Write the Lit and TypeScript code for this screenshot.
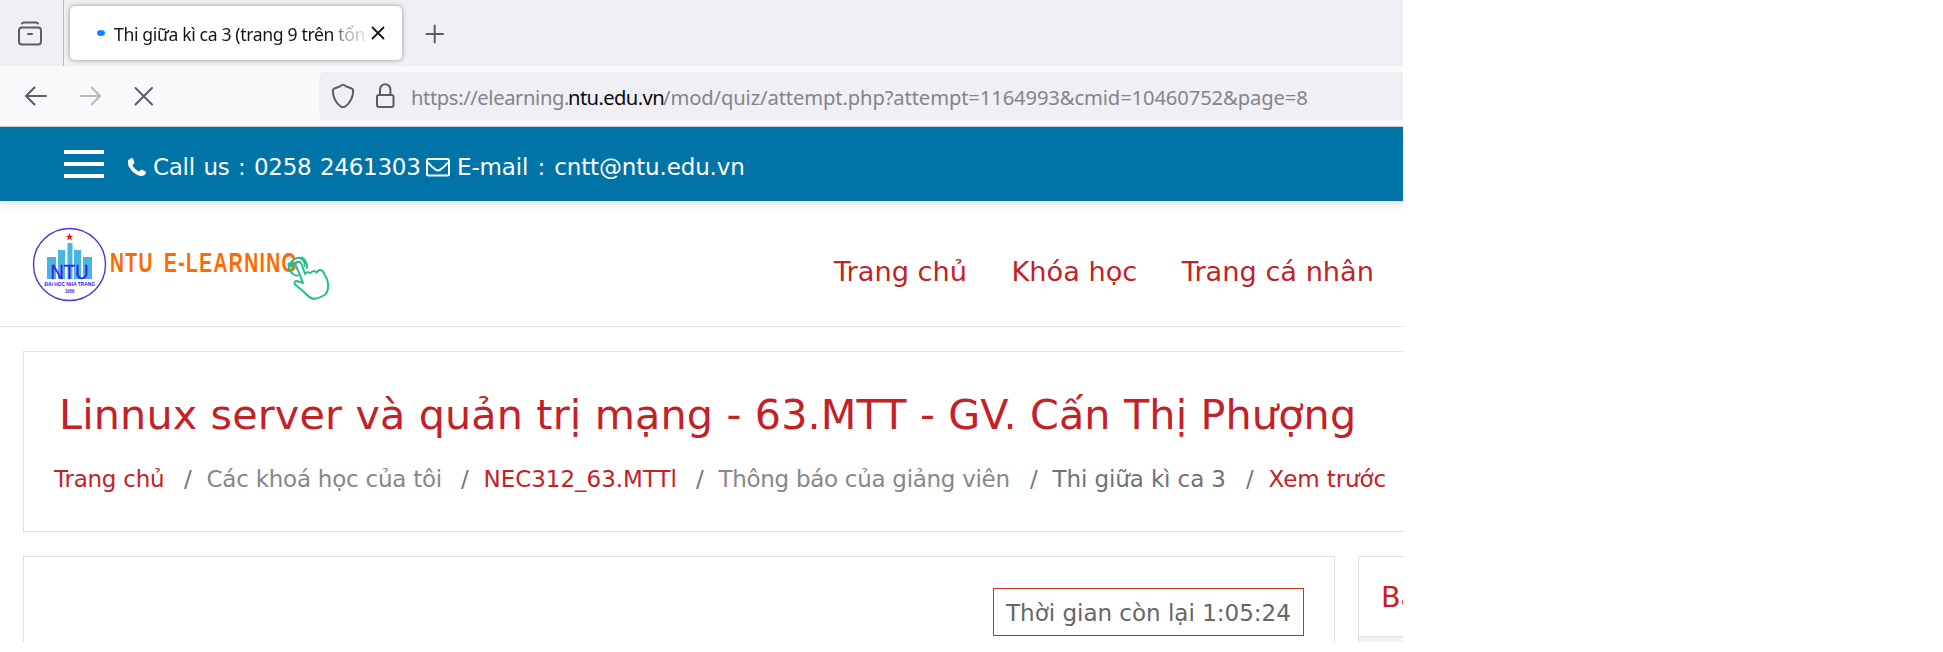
import { LitElement, html, css, svg } from "lit";
import { customElement } from "lit/decorators.js";
import { styleMap } from "lit/directives/style-map.js";

@customElement("browser-chrome")
class BrowserChrome extends LitElement {
  static styles = css`
    :host { display: block; font-family: "Noto Sans", "Open Sans", sans-serif; }
    svg { display: block; flex: none; fill: none; stroke: #5b5b66; stroke-width: 2; stroke-linecap: round; stroke-linejoin: round; }
    .tabs { display: flex; height: 66px; background: #f0f0f4; }
    .overview { box-sizing: border-box; width: 64px; padding: 21px 0 0 17px; border-right: 1px solid #b9b9bf; }
    .tab { box-sizing: border-box; display: flex; align-items: center; width: 332px; height: 54px; margin: 6px 0 0 6px; padding-left: 27px; border-radius: 5px; background: #fff; box-shadow: 0 0 5px rgba(0, 0, 0, 0.4); }
    .dot { width: 8px; height: 6px; border-radius: 50%; background: #0a84ff; }
    .title { width: 254px; margin-left: 9px; padding-top: 2px; overflow: hidden; white-space: nowrap; font-size: 17.6px; line-height: 30px; letter-spacing: -0.36px; color: #15141a; -webkit-mask-image: linear-gradient(90deg, #000 222px, rgba(0,0,0,.45) 228px, transparent 262px); mask-image: linear-gradient(90deg, #000 222px, rgba(0,0,0,.45) 228px, transparent 262px); }
    .close { margin-left: 3px; stroke: #15141a; stroke-width: 1.8; }
    .add { margin: 24px 0 0 23px; stroke-width: 2; }
    .bar { box-sizing: border-box; display: flex; align-items: center; height: 61px; padding-left: 24px; background: #f9f9fb; border-bottom: 1px solid #c9ced2; }
    .forward { margin-left: 31px; stroke: #b8b8c0; }
    .stop { margin-left: 31px; }
    .url { display: flex; align-items: center; flex: 1; height: 48px; margin-left: 165px; padding-left: 12px; border-radius: 6px 0 0 6px; background: #f0f0f4; white-space: nowrap; font-size: 20.2px; color: #84848a; }
    .lock { margin-left: 20px; }
    .address { display: flex; margin-left: 16px; padding-top: 2px; line-height: 30px; }
    .sub { width: 157px; letter-spacing: -0.4px; }
    .host { width: 95px; letter-spacing: -0.6px; color: #0c0c0d; }
    .path { letter-spacing: -0.12px; }
  `;
  render() {
    return html`
      <div class="tabs">
        <div class="overview">
          <svg width="26" height="25" viewBox="0 0 26 25"><path d="M5 2.5Q5.3 1.5 7 1.5H19Q20.7 1.5 21 2.5" /><rect x="2" y="6.5" width="22" height="17" rx="3" /><path d="M11 13H15" /></svg>
        </div>
        <div class="tab">
          <div class="dot"></div>
          <div class="title">Thi giữa kì ca 3 (trang 9 trên tổn</div>
          <svg class="close" width="14" height="14" viewBox="0 0 14 14"><path d="M1.5 1.5 12.5 12.5M12.5 1.5 1.5 12.5" /></svg>
        </div>
        <svg class="add" width="20" height="20" viewBox="0 0 20 20"><path d="M1.5 10H18M9.7 1.5V18.5" /></svg>
      </div>
      <div class="bar">
        <svg width="24" height="20" viewBox="0 0 24 20"><path d="M22 10H2M10.5 1.5 2 10l8.500 8.500" /></svg>
        <svg class="forward" width="24" height="20" viewBox="0 0 24 20"><path d="M1.500 10H21M12.500 1.500 21 10l-8.500 8.500" /></svg>
        <svg class="stop" width="20" height="20" viewBox="0 0 20 20"><path d="M1.500 2 18 18.500M18 2 1.500 18.500" /></svg>
        <div class="url">
          <svg width="24" height="26" viewBox="0 0 24 26"><path d="M12 1.700Q13 1.700 15 3.400L21.200 5.800Q22.200 6.300 22.200 7.500C22 14 20 19.500 14 23.700Q12 25 10 23.700C4 19.500 2 14 1.800 7.500Q1.800 6.300 2.800 5.800L9 3.400Q11 1.700 12 1.700Z" /></svg>
          <svg class="lock" width="20" height="26" viewBox="0 0 20 26"><rect x="2" y="12" width="16.500" height="12" rx="2" /><path d="M5 12V6.500a5.200 5.200 0 0 1 10.400 0V12" /></svg>
          <div class="address"><span class="sub">https://elearning.</span><span class="host">ntu.edu.vn</span><span class="path">/mod/quiz/attempt.php?attempt=1164993&amp;cmid=10460752&amp;page=8</span></div>
        </div>
      </div>`;
  }
}

@customElement("site-logo")
class SiteLogo extends LitElement {
  static styles = css`
    :host { display: block; }
    svg { display: block; font-family: "Liberation Sans", Arial, sans-serif; }
    .ring { fill: #fff; stroke: #5033dc; stroke-width: 1.4; }
    .towers { fill: #48b5e0; }
    .star { fill: #e02020; }
    .mono { fill: #3a20ea; }
    .brand { fill: #ff6a00; font-weight: bold; font-size: 28px; letter-spacing: 2px; word-spacing: 5px; }
    .hand { fill: #fff; stroke: #1fc18b; stroke-width: 2; stroke-linecap: round; stroke-linejoin: round; }
    .wave { fill: none; stroke: #1fc18b; stroke-width: 1.8; stroke-linecap: round; }
  `;
  render() {
    const towers = [[47, 257, 9], [58, 250, 7], [67.500, 243, 5], [74, 250, 7], [83, 257, 9]];
    return html`<svg width="300" height="76" viewBox="32 226 300 76">
      <circle class="ring" cx="69.500" cy="264.500" r="36" />
      ${towers.map(([x, y, w]) => svg`<rect class="towers" x=${x} y=${y} width=${w} height=${279 - y} />`)}
      <path class="star" d="M69.500 233l1 2.700h2.900l-2.300 1.800.8 2.800-2.400-1.600-2.400 1.600.8-2.800-2.300-1.800h2.900z" />
      <text class="mono" x="50.500" y="278.500" font-size="20.500" textLength="38" lengthAdjust="spacingAndGlyphs" stroke="#3a20ea" stroke-width=".3">NTU</text>
      <text class="mono" x="44.500" y="286" font-size="5.600" font-weight="bold" textLength="50.500" lengthAdjust="spacingAndGlyphs">ĐẠI HỌC NHA TRANG</text>
      <text class="mono" x="65" y="292.500" font-size="4.800" font-weight="bold" textLength="9.500" lengthAdjust="spacingAndGlyphs">1959</text>
      <text class="brand" x="110" y="272" textLength="188" lengthAdjust="spacingAndGlyphs">NTU E-LEARNING</text>
      <path class="hand" d="M295.500 265C295 261 300.500 260.500 301.500 264L305 274Q307 271 310.500 273Q313 269.500 316.500 272.500Q320 268 323 271.500L327 279Q330 288 325.500 294.500Q320 298 314 299Q309 298 303.500 291.500L295 284.500Q293.500 281 297 281L303 283Q299.500 273 295.500 265Z" />
      <path class="wave" d="M293.500 269A6.500 6.500 0 1 1 304.500 266M290 266.500A9.500 9.500 0 0 1 303 258.300M291 271.500Q294 276 298 275.500M302 257.500Q307.500 261 307 268M288.500 263.500Q288 269 291.500 273" />
    </svg>`;
  }
}

type Crumb = { text: string; width: number; spacing: number; tone: string };

@customElement("app-root")
class AppRoot extends LitElement {
  static styles = css`
    :host { display: block; height: 652px; overflow: hidden; background: #fff; font-family: "DejaVu Sans", Verdana, sans-serif; }
    .screen { width: 1403px; height: 642px; overflow: hidden; white-space: nowrap; }
    .contact { display: flex; align-items: center; height: 74px; padding-left: 64px; background: #0073a7; color: #fff; font-size: 23px; line-height: 30px; box-shadow: 0 5px 7px rgba(0, 0, 0, 0.09); }
    .burger { display: flex; flex-direction: column; gap: 8px; width: 40px; margin-right: 23px; }
    .burger i { height: 4px; background: #fff; }
    .contact svg { display: block; margin-top: 6px; }
    .call { width: 273px; margin-left: 6px; padding-top: 5px; word-spacing: 1.5px; letter-spacing: -0.27px; }
    .mail { margin-left: 7px; padding-top: 5px; word-spacing: 2px; letter-spacing: -0.14px; }
    .header { box-sizing: border-box; display: flex; justify-content: space-between; height: 126px; padding: 25px 29px 0 32px; border-bottom: 1px solid #e1e1e1; }
    .nav { display: flex; gap: 44.5px; padding-top: 26px; font-size: 27.2px; line-height: 40px; color: #c42127; }
    .card { box-sizing: border-box; flex: none; border: 1px solid #dedfe0; }
    .course { height: 181px; margin: 24px 0 0 23px; border-right: 0; padding-top: 39px; }
    h1 { margin: 0 0 0 35px; font-size: 41.3px; font-weight: 400; line-height: 48px; letter-spacing: 0.14px; color: #c42127; }
    .crumbs { display: flex; margin: 25px 0 0 30px; font-size: 23px; line-height: 30px; }
    .crumb { display: flex; flex: none; }
    .slash { flex: none; width: 22.5px; color: #707780; }
    .link { color: #c42127; }
    .muted { color: #85878a; }
    .text { color: #6b747c; }
    .columns { display: flex; gap: 23px; margin: 24px 0 0 23px; }
    .quiz { display: flex; justify-content: flex-end; width: 1312px; height: 120px; padding: 31px 30px 0 0; }
    .timer { box-sizing: border-box; width: 311px; height: 48px; padding-left: 12px; border: 1px solid #ca3120; font-size: 23px; line-height: 48px; color: #666; }
    .side { width: 300px; height: 120px; background: #f2f2f2; }
    .side h2 { box-sizing: border-box; height: 80px; margin: 0; padding-left: 22px; border-bottom: 1px solid #dedfe0; background: #fff; color: #c42127; font-size: 28.5px; font-weight: 400; line-height: 81px; }
  `;
  private crumbs: Crumb[] = [
    { text: "Trang chủ", width: 130, spacing: -0.24, tone: "link" },
    { text: "Các khoá học của tôi", width: 277, spacing: -0.24, tone: "muted" },
    { text: "NEC312_63.MTTl", width: 235, spacing: -0.02, tone: "link" },
    { text: "Thông báo của giảng viên", width: 334, spacing: -0.29, tone: "muted" },
    { text: "Thi giữa kì ca 3", width: 216, spacing: -0.1, tone: "text" },
    { text: "Xem trước", width: 150, spacing: -0.09, tone: "link" },
  ];
  render() {
    return html`<div class="screen">
      <browser-chrome></browser-chrome>
      <div class="contact">
        <div class="burger"><i></i><i></i><i></i></div>
        <svg width="20" height="20" viewBox="0 0 20 20"><path fill="#fff" d="M1 3.500Q3 .5 5.500 1Q7 3.500 7.500 6Q7 7.300 5.200 8Q7.500 12.500 12 14.800Q13 13 14.200 12.500Q17 13.200 19 14.800Q19 18.500 14.800 19Q10 19 5 14Q0 8.500 1 3.500Z" /></svg>
        <span class="call">Call us : 0258 2461303</span>
        <svg width="24" height="20" viewBox="0 0 24 20"><rect x="1" y="2" width="22" height="16.500" rx="1.500" fill="none" stroke="#fff" stroke-width="2" /><path d="M2 5.500Q5 9.500 10 12.800Q12 14 14 12.800Q19 9.500 22 5.500" fill="none" stroke="#fff" stroke-width="2" /></svg>
        <span class="mail">E-mail : cntt@ntu.edu.vn</span>
      </div>
      <div class="header">
        <site-logo></site-logo>
        <div class="nav"><span>Trang chủ</span><span>Khóa học</span><span>Trang cá nhân</span></div>
      </div>
      <div class="card course">
        <h1>Linnux server và quản trị mạng - 63.MTT - GV. Cấn Thị Phượng</h1>
        <div class="crumbs">
          ${this.crumbs.map((c, i) => html`<div class="crumb" style=${styleMap({ width: `${c.width}px`, letterSpacing: `${c.spacing}px` })}>
            ${i ? html`<span class="slash">/</span>` : ""}<span class=${c.tone}>${c.text}</span></div>`)}
        </div>
      </div>
      <div class="columns">
        <div class="card quiz"><div class="timer">Thời gian còn lại 1:05:24</div></div>
        <div class="card side"><h2>Ba</h2></div>
      </div>
    </div>`;
  }
}
